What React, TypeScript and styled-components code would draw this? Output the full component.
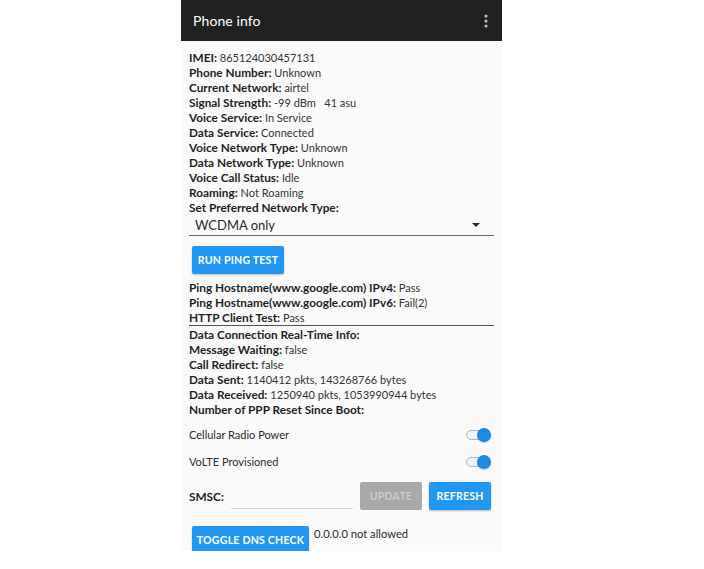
import React from 'react';
import styled, { createGlobalStyle } from 'styled-components';

const GlobalStyle = createGlobalStyle`
  html, body {
    margin: 0;
    padding: 0;
    background: #ffffff;
  }
  body {
    font-family: Lato, "Open Sans", Arial, sans-serif;
  }
`;

const Page = styled.div`
  display: flex;
  padding-left: 181px;
  height: 569px;
`;

const Phone = styled.div`
  width: 321px;
  height: 551px;
  background: #fafafa;
  overflow: hidden;
  display: flex;
  flex-direction: column;
`;

const AppBar = styled.div`
  height: 41px;
  flex-shrink: 0;
  background: #212121;
  display: flex;
  align-items: center;
  justify-content: space-between;
  padding: 0 14px 0 12px;
  box-sizing: border-box;
`;

const Title = styled.div`
  color: #ffffff;
  font-size: 14px;
  letter-spacing: 0.1px;
`;

const Content = styled.div`
  padding: 9px 8px 0;
  color: #222;
`;

const Line = styled.div<{ $divider?: boolean }>`
  font-size: 11px;
  line-height: 15px;
  white-space: nowrap;
  color: #333;
  border-bottom: ${(p) => (p.$divider ? '1px solid #555' : 'none')};
  b {
    font-size: 11.8px;
    font-weight: 700;
    color: #1f1f1f;
  }
`;

const Select = styled.div`
  height: 20px;
  border-bottom: 1px solid #6a6a6a;
  display: flex;
  align-items: center;
  justify-content: space-between;
  padding: 0 14px 0 6px;
  font-size: 13px;
  color: #2a2a2a;
`;

const Arrow = styled.span`
  width: 0;
  height: 0;
  border-left: 4px solid transparent;
  border-right: 4px solid transparent;
  border-top: 4px solid #2a2a2a;
`;

const Button = styled.button<{ $disabled?: boolean; $width: number }>`
  width: ${(p) => p.$width}px;
  height: 28px;
  padding: 0;
  border: none;
  border-radius: 2px;
  background: ${(p) => (p.$disabled ? '#a8a8a8' : '#2196f3')};
  color: ${(p) => (p.$disabled ? '#cbcbcb' : '#ffffff')};
  font-family: Lato, "Open Sans", Arial, sans-serif;
  font-weight: 700;
  font-size: 10.6px;
  letter-spacing: 0.2px;
  box-shadow: ${(p) => (p.$disabled ? 'none' : '0 1px 2px rgba(0,0,0,0.25)')};
  flex-shrink: 0;
`;

const PingButtonRow = styled.div`
  padding: 10px 0 6px 3px;
`;

const SwitchRow = styled.div<{ $first?: boolean }>`
  height: 27px;
  margin-top: ${(p) => (p.$first ? '4px' : '0')};
  display: flex;
  align-items: center;
  justify-content: space-between;
  padding-right: 3px;
  font-size: 11px;
  color: #2a2a2a;
`;

const Switch = styled.div`
  position: relative;
  width: 25px;
  height: 14px;
`;

const Track = styled.div`
  position: absolute;
  left: 0;
  top: 2px;
  width: 22px;
  height: 10px;
  box-sizing: border-box;
  border: 1.5px solid #aeb7bd;
  border-radius: 5px;
  background: #eef4f8;
`;

const Thumb = styled.div`
  position: absolute;
  right: 0;
  top: 0;
  width: 14px;
  height: 14px;
  border-radius: 50%;
  background: #1e88e5;
  box-shadow: 0 1px 1px rgba(0,0,0,0.2);
`;

const SmscRow = styled.div`
  margin-top: 7px;
  display: flex;
  align-items: center;
  padding-right: 3px;
`;

const SmscLabel = styled.span`
  font-size: 11.8px;
  font-weight: 700;
  color: #1f1f1f;
`;

const SmscInput = styled.div`
  width: 125px;
  height: 14px;
  margin: 10px 7px 0 7px;
  border-bottom: 1px solid #d6d6d6;
`;

const SmscButtons = styled.div`
  display: flex;
  gap: 7px;
`;

const DnsRow = styled.div`
  margin-top: 16px;
  padding-left: 3px;
  display: flex;
  align-items: flex-start;
  gap: 5px;
`;

const DnsText = styled.span`
  font-size: 11.2px;
  color: #2a2a2a;
  line-height: 15px;
`;

const MenuDots = () => (
  <svg width="4" height="14" viewBox="0 0 4 14">
    <circle cx="2" cy="2" r="1.6" fill="#bdbdbd" />
    <circle cx="2" cy="7" r="1.6" fill="#bdbdbd" />
    <circle cx="2" cy="12" r="1.6" fill="#bdbdbd" />
  </svg>
);

const info: [string, string][] = [
  ['IMEI:', '865124030457131'],
  ['Phone Number:', 'Unknown'],
  ['Current Network:', 'airtel'],
  ['Signal Strength:', '-99 dBm\u00a0\u00a0 41 asu'],
  ['Voice Service:', 'In Service'],
  ['Data Service:', 'Connected'],
  ['Voice Network Type:', 'Unknown'],
  ['Data Network Type:', 'Unknown'],
  ['Voice Call Status:', 'Idle'],
  ['Roaming:', 'Not Roaming'],
  ['Set Preferred Network Type:', ''],
];

const data: [string, string][] = [
  ['Data Connection Real-Time Info:', ''],
  ['Message Waiting:', 'false'],
  ['Call Redirect:', 'false'],
  ['Data Sent:', '1140412 pkts, 143268766 bytes'],
  ['Data Received:', '1250940 pkts, 1053990944 bytes'],
  ['Number of PPP Reset Since Boot:', ''],
];

const Toggle = () => (
  <Switch>
    <Track />
    <Thumb />
  </Switch>
);

const App = () => {
  return (
    <>
      <GlobalStyle />
      <Page>
        <Phone>
          <AppBar>
            <Title>Phone info</Title>
            <MenuDots />
          </AppBar>
          <Content>
            {info.map(([k, v]) => (
              <Line key={k}>
                <b>{k}</b> {v}
              </Line>
            ))}
            <Select>
              <span>WCDMA only</span>
              <Arrow />
            </Select>
            <PingButtonRow>
              <Button $width={92}>RUN PING TEST</Button>
            </PingButtonRow>
            <Line>
              <b>Ping Hostname(www.google.com) IPv4:</b> Pass
            </Line>
            <Line>
              <b>Ping Hostname(www.google.com) IPv6:</b> Fail(2)
            </Line>
            <Line $divider>
              <b>HTTP Client Test:</b> Pass
            </Line>
            <div style={{ height: 1 }} />
            {data.map(([k, v]) => (
              <Line key={k}>
                <b>{k}</b> {v}
              </Line>
            ))}
            <SwitchRow $first>
              <span>Cellular Radio Power</span>
              <Toggle />
            </SwitchRow>
            <SwitchRow>
              <span>VoLTE Provisioned</span>
              <Toggle />
            </SwitchRow>
            <SmscRow>
              <SmscLabel>SMSC:</SmscLabel>
              <SmscInput />
              <SmscButtons>
                <Button $disabled $width={62}>UPDATE</Button>
                <Button $width={62}>REFRESH</Button>
              </SmscButtons>
            </SmscRow>
            <DnsRow>
              <Button $width={117}>TOGGLE DNS CHECK</Button>
              <DnsText>0.0.0.0 not allowed</DnsText>
            </DnsRow>
          </Content>
        </Phone>
      </Page>
    </>
  );
};

export default App;
